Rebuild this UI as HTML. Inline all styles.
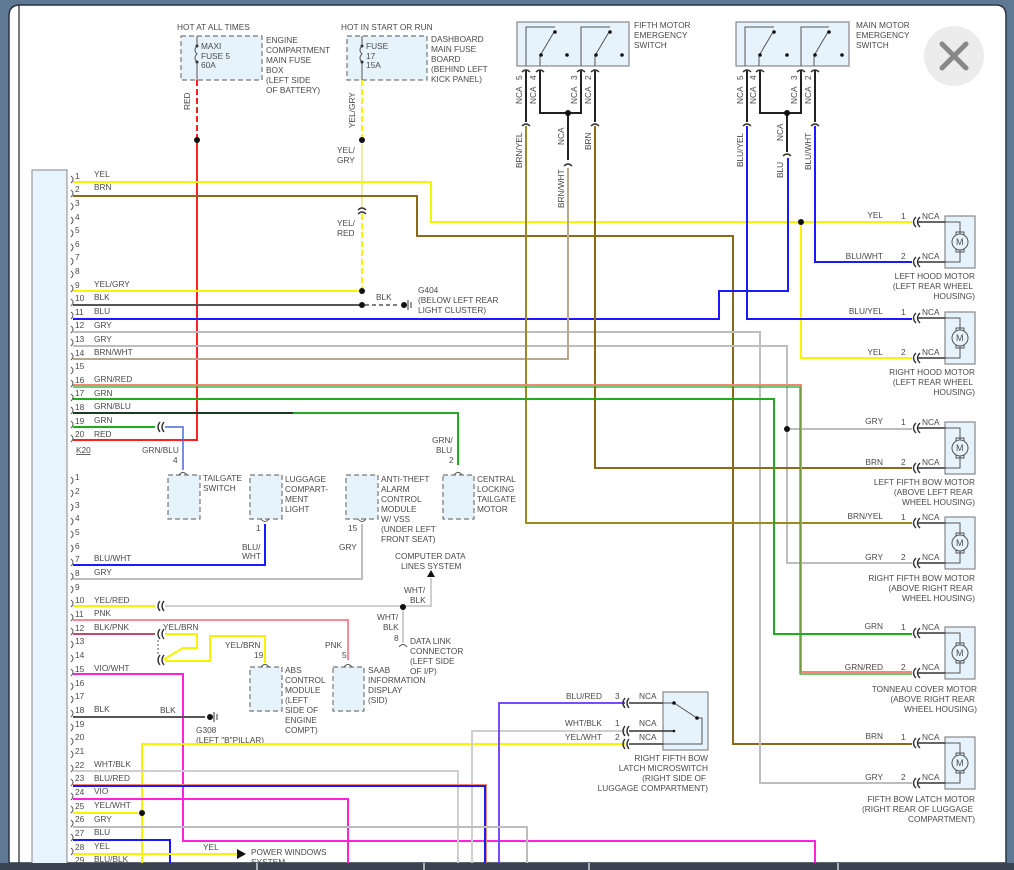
<!DOCTYPE html>
<html><head><meta charset="utf-8"><style>
html,body{margin:0;padding:0;width:1014px;height:870px;overflow:hidden;background:#5f7893}
svg{display:block}
text{font-family:"Liberation Sans",sans-serif;font-size:8.3px;fill:#4a4a4a}
path{fill:none}
.w{fill:none;stroke-width:2}
.k{fill:none;stroke:#333;stroke-width:1.4}
.t{fill:none;stroke:#555;stroke-width:1}
.bx{fill:#e6f3fc;stroke:#888;stroke-width:1.2}
.db{fill:#e6f3fc;stroke:#777;stroke-width:1.2;stroke-dasharray:5,3}
.fl{fill:#111}
</style></head><body>
<svg width="1014" height="870" viewBox="0 0 1014 870" xmlns="http://www.w3.org/2000/svg">
<rect x="0" y="0" width="1014" height="870" fill="#5f7893"/>
<path d="M9,863 V16 Q9,5 20,5 H996 Q1006,5 1006,16 V863 Z" style="fill:#fff" stroke="#2c3440" stroke-width="1.5"/>
<line x1="19" y1="5" x2="19" y2="863" stroke="#222" stroke-width="1.2"/>
<rect x="32" y="170" width="35" height="700" fill="#e8f4fd" stroke="#888"/>

<!-- fuse boxes -->
<text x="177" y="30">HOT AT ALL TIMES</text>
<rect class="db" x="181" y="36" width="81" height="44"/>
<path class="t" d="M197,36 V46 M197,62 V80 M197,46 q-4,4 0,8 q-4,4 0,8"/>
<circle cx="197" cy="46" r="1.5" fill="#333"/><circle cx="197" cy="62" r="1.5" fill="#333"/>
<text x="201" y="49">MAXI</text><text x="201" y="59">FUSE 5</text><text x="201" y="68">60A</text>
<text x="266" y="43">ENGINE</text><text x="266" y="53">COMPARTMENT</text><text x="266" y="63">MAIN FUSE</text><text x="266" y="73">BOX</text><text x="266" y="83">(LEFT SIDE</text><text x="266" y="93">OF BATTERY)</text>
<text x="341" y="30">HOT IN START OR RUN</text>
<rect class="db" x="347" y="36" width="80" height="44"/>
<path class="t" d="M362,36 V46 M362,62 V80 M362,46 q-4,4 0,8 q-4,4 0,8"/>
<circle cx="362" cy="46" r="1.5" fill="#333"/><circle cx="362" cy="62" r="1.5" fill="#333"/>
<text x="366" y="49">FUSE</text><text x="366" y="59">17</text><text x="366" y="68">15A</text>
<text x="431" y="42">DASHBOARD</text><text x="431" y="52">MAIN FUSE</text><text x="431" y="62">BOARD</text><text x="431" y="72">(BEHIND LEFT</text><text x="431" y="82">KICK PANEL)</text>

<!-- red -->
<path class="w" stroke="#ff2020" stroke-dasharray="6,3" d="M197,80 V138"/>
<path class="w" stroke="#ff2020" d="M197,140 V440 H73"/>
<circle cx="197" cy="140" r="3" fill="#111"/>
<text transform="translate(190,110) rotate(-90)">RED</text>
<!-- yel/gry -->
<path class="w" stroke="#f5f500" stroke-dasharray="6,3" d="M362,80 V138"/>
<path stroke="#e8e880" stroke-width="1.5" d="M362,140 V208"/>
<path class="k" d="M358,210 q4,-4 8,0 M358,214 q4,-4 8,0"/>
<path class="w" stroke="#f5f500" stroke-dasharray="6,3" d="M362,214 V289"/>
<circle cx="362" cy="140" r="3" fill="#111"/>
<text transform="translate(355,128) rotate(-90)">YEL/GRY</text>
<text x="337" y="153">YEL/</text><text x="337" y="163">GRY</text>
<text x="337" y="226">YEL/</text><text x="337" y="236">RED</text>
<path class="w" stroke="#f5f500" d="M73,291 H360"/>
<path class="w" stroke="#555" d="M73,305 H360"/>
<circle cx="362" cy="291" r="3" fill="#111"/><circle cx="362" cy="305" r="3" fill="#111"/>
<path stroke="#555" stroke-width="1.5" stroke-dasharray="4,3" d="M365,305 H400"/>
<circle cx="404" cy="305" r="3" fill="#111"/><path stroke="#333" d="M408,300 V310 M411,302 V308"/>
<text x="376" y="300">BLK</text>
<text x="418" y="293">G404</text><text x="418" y="303">(BELOW LEFT REAR</text><text x="418" y="313">LIGHT CLUSTER)</text>

<!-- switches -->
<rect class="bx" x="517" y="22" width="112" height="44"/>
<rect class="bx" x="736" y="22" width="113" height="44"/>
<g class="t">
<path d="M526,66 V27 H555 M554,32 L541,54 M540,66 V56 M581,66 V27 H610 M609,32 L596,54 M595,66 V56"/>
<path d="M745,66 V27 H774 M773,32 L760,54 M759,66 V56 M801,66 V27 H829 M828,32 L815,54 M814,66 V56"/>
</g>
<g fill="#111"><circle cx="555" cy="32" r="1.8"/><circle cx="541" cy="55" r="1.8"/><circle cx="567" cy="55" r="1.8"/><circle cx="610" cy="32" r="1.8"/><circle cx="596" cy="55" r="1.8"/><circle cx="622" cy="55" r="1.8"/>
<circle cx="774" cy="32" r="1.8"/><circle cx="760" cy="55" r="1.8"/><circle cx="787" cy="55" r="1.8"/><circle cx="829" cy="32" r="1.8"/><circle cx="815" cy="55" r="1.8"/><circle cx="842" cy="55" r="1.8"/></g>
<text x="634" y="28">FIFTH MOTOR</text><text x="634" y="38">EMERGENCY</text><text x="634" y="48">SWITCH</text>
<text x="856" y="28">MAIN MOTOR</text><text x="856" y="38">EMERGENCY</text><text x="856" y="48">SWITCH</text>
<path class="w" stroke="#222" d="M526,70 V122 M540,70 V113 H566 M570,113 H581 V70 M595,70 V122 M568,115 V160"/>
<path class="w" stroke="#222" d="M747,70 V122 M760,70 V113 H785 M789,113 H801 V70 M815,70 V122 M787,115 V152"/>
<circle cx="568" cy="113" r="3" fill="#111"/><circle cx="787" cy="113" r="3" fill="#111"/>
<g class="k">
<path d="M522,72 q4,-4 8,0 M536,72 q4,-4 8,0 M577,72 q4,-4 8,0 M591,72 q4,-4 8,0 M522,126 q4,-4 8,0 M591,126 q4,-4 8,0 M564,166 q4,-4 8,0"/>
<path d="M743,72 q4,-4 8,0 M756,72 q4,-4 8,0 M797,72 q4,-4 8,0 M811,72 q4,-4 8,0 M743,126 q4,-4 8,0 M811,126 q4,-4 8,0 M783,156 q4,-4 8,0"/>
</g>
<g>
<text transform="translate(522,104) rotate(-90)">NCA</text><text transform="translate(536,104) rotate(-90)">NCA</text><text transform="translate(577,104) rotate(-90)">NCA</text><text transform="translate(591,104) rotate(-90)">NCA</text>
<text transform="translate(522,80) rotate(-90)">5</text><text transform="translate(536,80) rotate(-90)">4</text><text transform="translate(577,80) rotate(-90)">3</text><text transform="translate(591,80) rotate(-90)">2</text>
<text transform="translate(564,145) rotate(-90)">NCA</text>
<text transform="translate(522,168) rotate(-90)">BRN/YEL</text><text transform="translate(564,208) rotate(-90)">BRN/WHT</text><text transform="translate(591,150) rotate(-90)">BRN</text>
<text transform="translate(743,104) rotate(-90)">NCA</text><text transform="translate(756,104) rotate(-90)">NCA</text><text transform="translate(797,104) rotate(-90)">NCA</text><text transform="translate(811,104) rotate(-90)">NCA</text>
<text transform="translate(743,80) rotate(-90)">5</text><text transform="translate(756,80) rotate(-90)">4</text><text transform="translate(797,80) rotate(-90)">3</text><text transform="translate(811,80) rotate(-90)">2</text>
<text transform="translate(783,141) rotate(-90)">NCA</text>
<text transform="translate(743,167) rotate(-90)">BLU/YEL</text><text transform="translate(783,178) rotate(-90)">BLU</text><text transform="translate(811,170) rotate(-90)">BLU/WHT</text>
</g>

<!-- connector1 wires -->
<path class="w" stroke="#f5f500" d="M73,182 H431 V222 H912 M801,222 V358 H912"/>
<circle cx="801" cy="222" r="3" fill="#111"/>
<path class="w" stroke="#8a6a18" d="M73,196 H417 V236 H733 V744 H912"/>
<path class="w" stroke="#1a1aff" d="M73,319 H719 V291 H788 V158 M747,126 V319 H912 M815,126 V262 H912"/>
<path class="w" stroke="#bdbdbd" d="M73,332 H760 V783 H912 M73,346 H787 V563 H912 M787,429 H912"/>
<circle cx="787" cy="429" r="3" fill="#111"/>
<path class="w" stroke="#b8a888" d="M73,359 H568 V168"/>
<path class="w" stroke="#9b8a22" d="M526,126 V523 H912"/>
<path class="w" stroke="#8a6a18" d="M595,126 V468 H912"/>
<path class="w" stroke="#f08878" d="M73,385 H801 V672 H912"/>
<path fill="none" stroke="#22aa22" stroke-width="1.2" d="M73,387 H800 V674 H912"/>
<path class="w" stroke="#22aa22" d="M73,399 H774 V634 H912"/>
<path class="w" stroke="#1c3a1c" d="M73,413 H293"/>
<path class="w" stroke="#22aa22" d="M293,413 H458 V465"/>
<path class="w" stroke="#22aa22" d="M73,427 H155"/>
<path class="k" d="M160,422 q-4,5 0,10 M164,422 q-4,5 0,10"/>
<path stroke="#4a6ad8" stroke-width="1.5" fill="none" d="M165,427 H183 V470"/>
<text x="76" y="453" style="text-decoration:underline">K20</text>
<text x="142" y="453">GRN/BLU</text><text x="173" y="463">4</text>
<text x="432" y="443">GRN/</text><text x="436" y="453">BLU</text><text x="449" y="463">2</text>

<!-- connector 1 pin labels -->
<g>
<text x="75" y="179">1</text><text x="94" y="177">YEL</text>
<text x="75" y="192">2</text><text x="94" y="190">BRN</text>
<text x="75" y="206">3</text><text x="75" y="220">4</text><text x="75" y="233">5</text><text x="75" y="247">6</text><text x="75" y="260">7</text><text x="75" y="274">8</text>
<text x="75" y="288">9</text><text x="94" y="287">YEL/GRY</text>
<text x="75" y="301">10</text><text x="94" y="300">BLK</text>
<text x="75" y="315">11</text><text x="94" y="314">BLU</text>
<text x="75" y="328">12</text><text x="94" y="328">GRY</text>
<text x="75" y="342">13</text><text x="94" y="342">GRY</text>
<text x="75" y="356">14</text><text x="94" y="355">BRN/WHT</text>
<text x="75" y="369">15</text>
<text x="75" y="383">16</text><text x="94" y="382">GRN/RED</text>
<text x="75" y="396">17</text><text x="94" y="396">GRN</text>
<text x="75" y="410">18</text><text x="94" y="409">GRN/BLU</text>
<text x="75" y="424">19</text><text x="94" y="423">GRN</text>
<text x="75" y="437">20</text><text x="94" y="437">RED</text>
</g>
<g class="t" stroke="#444">
<path d="M71,176 q4,3 0,7 M71,190 q4,3 0,7 M71,203 q4,3 0,7 M71,217 q4,3 0,7 M71,230 q4,3 0,7 M71,244 q4,3 0,7 M71,258 q4,3 0,7 M71,271 q4,3 0,7 M71,285 q4,3 0,7 M71,299 q4,3 0,7 M71,312 q4,3 0,7 M71,326 q4,3 0,7 M71,339 q4,3 0,7 M71,353 q4,3 0,7 M71,367 q4,3 0,7 M71,380 q4,3 0,7 M71,394 q4,3 0,7 M71,407 q4,3 0,7 M71,421 q4,3 0,7 M71,435 q4,3 0,7"/>
<path d="M71,477 q4,3 0,7 M71,490 q4,3 0,7 M71,504 q4,3 0,7 M71,518 q4,3 0,7 M71,531 q4,3 0,7 M71,545 q4,3 0,7 M71,559 q4,3 0,7 M71,573 q4,3 0,7 M71,586 q4,3 0,7 M71,600 q4,3 0,7 M71,614 q4,3 0,7 M71,628 q4,3 0,7 M71,641 q4,3 0,7 M71,655 q4,3 0,7 M71,669 q4,3 0,7 M71,683 q4,3 0,7 M71,696 q4,3 0,7 M71,710 q4,3 0,7 M71,724 q4,3 0,7 M71,738 q4,3 0,7 M71,751 q4,3 0,7 M71,765 q4,3 0,7 M71,779 q4,3 0,7 M71,793 q4,3 0,7 M71,806 q4,3 0,7 M71,820 q4,3 0,7 M71,834 q4,3 0,7 M71,848 q4,3 0,7"/>
</g>

<!-- components -->
<rect class="db" x="168" y="475" width="32" height="44"/><rect class="db" x="250" y="475" width="32" height="44"/>
<rect class="db" x="346" y="475" width="32" height="44"/><rect class="db" x="443" y="475" width="31" height="44"/>
<path class="t" d="M179,475 q4,-5 8,0 M454,475 q4,-5 8,0 M261,519 q4,5 8,0 M358,519 q4,5 8,0"/>
<text x="203" y="481">TAILGATE</text><text x="203" y="491">SWITCH</text>
<text x="285" y="482">LUGGAGE</text><text x="285" y="492">COMPART-</text><text x="285" y="502">MENT</text><text x="285" y="512">LIGHT</text>
<text x="381" y="482">ANTI-THEFT</text><text x="381" y="492">ALARM</text><text x="381" y="502">CONTROL</text><text x="381" y="512">MODULE</text><text x="381" y="522">W/ VSS</text><text x="381" y="532">(UNDER LEFT</text><text x="381" y="542">FRONT SEAT)</text>
<text x="477" y="482">CENTRAL</text><text x="477" y="492">LOCKING</text><text x="477" y="502">TAILGATE</text><text x="477" y="512">MOTOR</text>
<text x="256" y="531">1</text><text x="242" y="550">BLU/</text><text x="242" y="559">WHT</text>
<text x="348" y="531">15</text><text x="339" y="550">GRY</text>
<path class="w" stroke="#1a1aff" d="M265,524 V565 H73"/>
<path class="w" stroke="#bdbdbd" d="M362,524 V579 H73"/>
<text x="395" y="559">COMPUTER DATA</text><text x="401" y="569">LINES SYSTEM</text>
<path d="M427,577 L431,570 L435,577 Z" style="fill:#111"/>
<path class="w" stroke="#f5f500" d="M73,606 H155"/>
<path class="k" d="M160,601 q-4,5 0,10 M164,601 q-4,5 0,10"/>
<path class="w" stroke="#cfcfcf" d="M165,606 H431 V578 M403,606 V643"/>
<circle cx="403" cy="607" r="3" fill="#111"/>
<path class="t" d="M399,647 q4,-5 8,0"/>
<text x="404" y="593">WHT/</text><text x="410" y="603">BLK</text>
<text x="377" y="620">WHT/</text><text x="383" y="630">BLK</text><text x="394" y="641">8</text>
<text x="410" y="644">DATA LINK</text><text x="410" y="654">CONNECTOR</text><text x="410" y="664">(LEFT SIDE</text><text x="410" y="674">OF I/P)</text>
<path class="w" stroke="#ff8899" d="M73,620 H348 V660"/>
<text x="325" y="648">PNK</text><text x="342" y="658">5</text>
<path class="w" stroke="#c04a6a" d="M73,634 H155"/>
<path class="k" d="M160,629 q-4,5 0,10 M164,629 q-4,5 0,10 M160,655 q-4,5 0,10 M164,655 q-4,5 0,10"/>
<path stroke="#555" stroke-dasharray="2,2" d="M158,640 V655"/>
<path class="w" stroke="#f5f500" d="M165,634 H197 V648 H183 L163,660 M165,661 H210 V636 H265 V663"/>
<text x="163" y="630">YEL/BRN</text><text x="225" y="648">YEL/BRN</text><text x="254" y="658">19</text>
<rect class="db" x="250" y="667" width="32" height="44"/><rect class="db" x="333" y="667" width="31" height="44"/>
<path class="t" d="M261,667 q4,-5 8,0 M344,667 q4,-5 8,0"/>
<text x="285" y="673">ABS</text><text x="285" y="683">CONTROL</text><text x="285" y="693">MODULE</text><text x="285" y="703">(LEFT</text><text x="285" y="713">SIDE OF</text><text x="285" y="723">ENGINE</text><text x="285" y="733">COMPT)</text>
<text x="368" y="673">SAAB</text><text x="368" y="683">INFORMATION</text><text x="368" y="693">DISPLAY</text><text x="368" y="703">(SID)</text>
<path class="w" stroke="#ff22dd" d="M73,674 H183 V841 H815 V863"/>
<path class="w" stroke="#555" d="M73,717 H205"/>
<circle cx="210" cy="717" r="3" fill="#111"/><path stroke="#333" d="M214,712 V722 M217,714 V720"/>
<text x="160" y="713">BLK</text><text x="196" y="733">G308</text><text x="196" y="743">(LEFT "B"PILLAR)</text>
<path class="w" stroke="#f5f500" d="M142,863 V744 H625"/>
<path class="w" stroke="#cfcfcf" d="M73,771 H458 V863 M472,863 V731 H625"/>
<path class="w" stroke="#f08878" d="M73,785 H486 V863"/>
<path class="w" stroke="#1a1aff" d="M73,786 H485 V863"/>
<path class="w" stroke="#7a4aff" d="M499,863 V703 H625"/>
<path class="w" stroke="#ff22dd" d="M73,799 H348 V863"/>
<path class="w" stroke="#f5f500" d="M73,813 H138"/>
<circle cx="142" cy="813" r="3" fill="#111"/>
<path class="w" stroke="#bdbdbd" d="M73,827 H527 V863"/>
<path class="w" stroke="#1a1aff" d="M73,840 H170 V863"/>
<path class="w" stroke="#f5f500" d="M73,854 H237"/>
<path d="M237,849 L246,854 L237,859 Z" style="fill:#111"/>
<text x="203" y="850">YEL</text><text x="251" y="855">POWER WINDOWS</text><text x="251" y="865">SYSTEM</text>
<g>
<text x="75" y="480">1</text><text x="75" y="494">2</text><text x="75" y="508">3</text><text x="75" y="521">4</text><text x="75" y="535">5</text><text x="75" y="549">6</text>
<text x="75" y="562">7</text><text x="94" y="561">BLU/WHT</text>
<text x="75" y="576">8</text><text x="94" y="575">GRY</text>
<text x="75" y="590">9</text>
<text x="75" y="603">10</text><text x="94" y="603">YEL/RED</text>
<text x="75" y="617">11</text><text x="94" y="616">PNK</text>
<text x="75" y="631">12</text><text x="94" y="630">BLK/PNK</text>
<text x="75" y="644">13</text><text x="75" y="658">14</text>
<text x="75" y="672">15</text><text x="94" y="671">VIO/WHT</text>
<text x="75" y="686">16</text><text x="75" y="699">17</text>
<text x="75" y="713">18</text><text x="94" y="712">BLK</text>
<text x="75" y="727">19</text><text x="75" y="740">20</text><text x="75" y="754">21</text>
<text x="75" y="768">22</text><text x="94" y="767">WHT/BLK</text>
<text x="75" y="781">23</text><text x="94" y="781">BLU/RED</text>
<text x="75" y="795">24</text><text x="94" y="794">VIO</text>
<text x="75" y="809">25</text><text x="94" y="808">YEL/WHT</text>
<text x="75" y="822">26</text><text x="94" y="822">GRY</text>
<text x="75" y="836">27</text><text x="94" y="835">BLU</text>
<text x="75" y="850">28</text><text x="94" y="849">YEL</text>
<text x="75" y="863">29</text><text x="94" y="862">BLU/BLK</text>
</g>

<!-- microswitch -->
<rect class="bx" x="663" y="692" width="45" height="58"/>
<path class="k" d="M629,703 H663 M629,731 H674 M629,744 H663"/>
<path class="k" d="M625,698 q-4,5 0,10 M629,698 q-4,5 0,10 M625,726 q-4,5 0,10 M629,726 q-4,5 0,10 M625,739 q-4,5 0,10 M629,739 q-4,5 0,10"/>
<path class="t" d="M663,703 H674 L697,718 H702 V744 H663"/>
<circle cx="674" cy="703" r="1.8" fill="#111"/><circle cx="697" cy="718" r="1.8" fill="#111"/><circle cx="674" cy="731" r="1.3" fill="#111"/>
<text x="566" y="699">BLU/RED</text><text x="615" y="699">3</text><text x="639" y="699">NCA</text>
<text x="565" y="726">WHT/BLK</text><text x="615" y="726">1</text><text x="639" y="726">NCA</text>
<text x="565" y="740">YEL/WHT</text><text x="615" y="740">2</text><text x="639" y="740">NCA</text>
<g text-anchor="end"><text x="708" y="761">RIGHT FIFTH BOW</text><text x="708" y="771">LATCH MICROSWITCH</text><text x="706" y="781">(RIGHT SIDE OF</text><text x="708" y="791">LUGGAGE COMPARTMENT)</text></g>

<!-- motors -->
<g id="motors">
<g transform="translate(0,216)">
<rect class="bx" x="945" y="0" width="30" height="52"/>
<path class="k" d="M918,6 H945 M918,46 H945"/><path class="t" d="M945,6 H960 V18 M945,46 H960 V34"/>
<rect x="956" y="16" width="8" height="20" fill="none" stroke="#555"/><circle cx="960" cy="26" r="8" fill="#e6f3fc" stroke="#555"/><text x="956" y="29" style="font-size:9px">M</text>
<path class="k" d="M916,1 q-5,5 0,10 M920,1 q-5,5 0,10 M916,41 q-5,5 0,10 M920,41 q-5,5 0,10"/>
<text x="922" y="3">NCA</text><text x="922" y="43">NCA</text><text x="901" y="3">1</text><text x="901" y="43">2</text>
</g>
</g>
<use href="#motors" y="96"/><use href="#motors" y="206"/><use href="#motors" y="301"/><use href="#motors" y="411"/><use href="#motors" y="521"/>
<g text-anchor="end">
<text x="883" y="218">YEL</text><text x="883" y="259">BLU/WHT</text>
<text x="975" y="279">LEFT HOOD MOTOR</text><text x="973" y="289">(LEFT REAR WHEEL</text><text x="975" y="299">HOUSING)</text>
<text x="883" y="314">BLU/YEL</text><text x="883" y="355">YEL</text>
<text x="975" y="375">RIGHT HOOD MOTOR</text><text x="973" y="385">(LEFT REAR WHEEL</text><text x="975" y="395">HOUSING)</text>
<text x="883" y="424">GRY</text><text x="883" y="465">BRN</text>
<text x="975" y="485">LEFT FIFTH BOW MOTOR</text><text x="973" y="495">(ABOVE LEFT REAR</text><text x="975" y="505">WHEEL HOUSING)</text>
<text x="883" y="519">BRN/YEL</text><text x="883" y="560">GRY</text>
<text x="975" y="581">RIGHT FIFTH BOW MOTOR</text><text x="973" y="591">(ABOVE RIGHT REAR</text><text x="975" y="601">WHEEL HOUSING)</text>
<text x="883" y="629">GRN</text><text x="883" y="670">GRN/RED</text>
<text x="977" y="692">TONNEAU COVER MOTOR</text><text x="975" y="702">(ABOVE RIGHT REAR</text><text x="977" y="712">WHEEL HOUSING)</text>
<text x="883" y="739">BRN</text><text x="883" y="780">GRY</text>
<text x="975" y="802">FIFTH BOW LATCH MOTOR</text><text x="973" y="812">(RIGHT REAR OF LUGGAGE</text><text x="975" y="822">COMPARTMENT)</text>
</g>

<!-- close button -->
<circle cx="954" cy="56" r="30" fill="#ececec"/>
<path d="M942,44 L966,68 M966,44 L942,68" stroke="#888" stroke-width="5" stroke-linecap="round"/>

<!-- bottom bar -->
<rect x="0" y="863" width="1014" height="7" fill="#3a4350"/>
<path d="M257,863 V870 M424,863 V870 M589,863 V870 M838,863 V870" stroke="#cfd4da" stroke-width="1.5"/>
</svg>
</body></html>
